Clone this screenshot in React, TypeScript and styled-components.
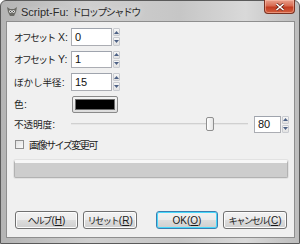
import styled, { createGlobalStyle } from "styled-components";

const GlobalStyle = createGlobalStyle`
  html, body {
    margin: 0;
    padding: 0;
    overflow: hidden;
    background: #ffffff;
  }
  * {
    box-sizing: border-box;
  }
`;

const UI_FONT = `"Liberation Sans", "Noto Sans CJK JP", sans-serif`;

const Spin = ({ value, width }: { value: string; width: number }) => (
  <StyledSpin>
    <StyledEntry style={{ width }}>{value}</StyledEntry>
    <StyledArrows>
      <StyledArrow>
        <svg width="5" height="3" viewBox="0 0 5 3">
          <path d="M0 3 L2.5 0 L5 3 Z" fill="#4d6185" />
        </svg>
      </StyledArrow>
      <StyledArrow>
        <svg width="5" height="3" viewBox="0 0 5 3">
          <path d="M0 0 L2.5 3 L5 0 Z" fill="#4d6185" />
        </svg>
      </StyledArrow>
    </StyledArrows>
  </StyledSpin>
);

const App = () => {
  return (
    <>
      <GlobalStyle />
      <StyledWindow>
        <StyledTitleBar>
          <svg width="12" height="12" viewBox="0 0 12 12">
            <path d="M1 2 L4 4 L8 4 L11 2 L10 7 L8 11 L4 11 L2 7 Z" fill="#6b6b66" />
            <circle cx="4.5" cy="6.5" r="1.3" fill="#ffffff" />
            <circle cx="7.5" cy="6.5" r="1.3" fill="#ffffff" />
            <circle cx="4.5" cy="6.5" r="0.6" fill="#222" />
            <circle cx="7.5" cy="6.5" r="0.6" fill="#222" />
          </svg>
          <StyledTitle>
            Script-Fu: <StyledKana>ドロップシャドウ</StyledKana>
          </StyledTitle>
          <StyledClose>
            <svg width="10" height="8" viewBox="0 0 10 8">
              <path d="M1.5 1 L8.5 7 M8.5 1 L1.5 7" stroke="#6b2517" strokeWidth="3" />
              <path d="M1.5 1 L8.5 7 M8.5 1 L1.5 7" stroke="#ffffff" strokeWidth="1.6" />
            </svg>
          </StyledClose>
        </StyledTitleBar>
        <StyledClient>
          <StyledForm>
            <StyledLabel>
              <StyledKana>オフセット</StyledKana> X:
            </StyledLabel>
            <Spin value="0" width={41} />
            <StyledLabel>
              <StyledKana>オフセット</StyledKana> Y:
            </StyledLabel>
            <Spin value="1" width={41} />
            <StyledLabel>
              <StyledKana $loose>ぼかし半径</StyledKana>:
            </StyledLabel>
            <Spin value="15" width={41} />
            <StyledLabel>
              <StyledKana $loose>色</StyledKana>:
            </StyledLabel>
            <StyledColorButton>
              <StyledSwatch />
            </StyledColorButton>
            <StyledLabel>
              <StyledKana $loose>不透明度</StyledKana>:
            </StyledLabel>
            <StyledSliderRow>
              <StyledTrack>
                <StyledThumb style={{ left: `${80 * 1.69}px` }} />
              </StyledTrack>
              <Spin value="80" width={27} />
            </StyledSliderRow>
          </StyledForm>
          <StyledCheckRow>
            <StyledCheckbox />
            <StyledKana>画像サイズ変更可</StyledKana>
          </StyledCheckRow>
          <StyledProgress />
          <StyledButtons>
            <StyledButton $w={64}>
              <StyledKana>ヘルプ</StyledKana>(<u>H</u>)
            </StyledButton>
            <StyledButton $w={55}>
              <StyledKana>リセット</StyledKana>(<u>R</u>)
            </StyledButton>
            <StyledSpacer />
            <StyledButton $w={63} $focused>
              OK(<u>O</u>)
            </StyledButton>
            <StyledButton $w={65}>
              <StyledKana>キャンセル</StyledKana>(<u>C</u>)
            </StyledButton>
          </StyledButtons>
        </StyledClient>
      </StyledWindow>
    </>
  );
};

export default App;

const StyledWindow = styled.div`
  width: 300px;
  height: 244px;
  display: flex;
  flex-direction: column;
  border: 1px solid #5a5a5a;
  border-radius: 6px 6px 0 0;
  background: linear-gradient(
    to right,
    #b4b4b4 0%,
    #cfcfcf 30%,
    #c6c6c6 60%,
    #d9d9d9 82%,
    #bdbdbd 100%
  );
  font-family: ${UI_FONT};
  color: #1e1e1e;
`;

const StyledKana = styled.span<{ $loose?: boolean }>`
  font-family: "Noto Sans CJK JP", sans-serif;
  font-size: 0.92em;
  letter-spacing: ${(p) => (p.$loose ? "-0.02em" : "-0.16em")};
  padding-right: ${(p) => (p.$loose ? "0.05em" : "0.06em")};
`;

const StyledTitleBar = styled.div`
  height: 20px;
  display: flex;
  align-items: center;
  padding-left: 5px;
  gap: 3px;
  position: relative;
`;

const StyledTitle = styled.div`
  font-size: 11px;
  color: #2a2a2a;
  white-space: nowrap;
  text-shadow: 0 0 6px rgba(255, 255, 255, 0.8);
`;

const StyledClose = styled.div`
  position: absolute;
  top: -1px;
  right: 4px;
  width: 31px;
  height: 14px;
  display: flex;
  align-items: center;
  justify-content: center;
  border: 1px solid #7a3222;
  border-top: none;
  border-radius: 0 0 4px 4px;
  background: linear-gradient(to bottom, #e9a08c 0%, #d86b51 45%, #c23c21 55%, #d3603f 100%);
  box-shadow: inset 0 0 0 1px rgba(255, 200, 180, 0.5);
`;

const StyledClient = styled.div`
  flex: 1;
  margin: 0 4px 5px 5px;
  background: #f0f0f0;
  border: 1px solid #8e8e8e;
  padding: 6px 7px 8px 7px;
  display: flex;
  flex-direction: column;
  font-size: 11px;
`;

const StyledForm = styled.div`
  display: grid;
  grid-template-columns: 57px 1fr;
  grid-template-rows: 17.5px 17.5px 17.5px 17px 17.5px;
  row-gap: 5px;
  align-items: center;

  & > :nth-child(n + 9) {
    margin-top: -4px;
  }
`;

const StyledLabel = styled.div`
  font-size: 10.5px;
  white-space: nowrap;
`;

const StyledSpin = styled.div`
  display: flex;
  align-items: stretch;
  height: 17.5px;
  gap: 1px;
`;

const StyledEntry = styled.div`
  background: #ffffff;
  border: 1px solid #abadb3;
  border-top-color: #9fa4ad;
  padding-left: 3px;
  font-size: 11px;
  display: flex;
  align-items: center;
  color: #111;
`;

const StyledArrows = styled.div`
  width: 7px;
  display: flex;
  flex-direction: column;
  gap: 1px;
`;

const StyledArrow = styled.div`
  flex: 1;
  background: linear-gradient(to bottom, #f6f6f6, #e2e2e2);
  border: 1px solid #c9cbd0;
  border-radius: 1px;
  display: flex;
  align-items: center;
  justify-content: center;
`;

const StyledColorButton = styled.div`
  width: 46px;
  height: 17px;
  margin-left: 1px;
  border: 1px solid #8a8a8a;
  border-radius: 2px;
  background: linear-gradient(to bottom, #f4f4f4, #dcdcdc);
  padding: 2px;
`;

const StyledSwatch = styled.div`
  width: 100%;
  height: 100%;
  background: #000000;
  border: 1px solid #6d6d6d;
`;

const StyledSliderRow = styled.div`
  display: flex;
  align-items: center;
  gap: 6px;
`;

const StyledTrack = styled.div`
  position: relative;
  width: 177px;
  height: 2px;
  background: #e6e6e6;
  border-top: 1px solid #d0d0d0;
`;

const StyledThumb = styled.div`
  position: absolute;
  top: -7px;
  width: 8px;
  height: 14px;
  border: 1px solid #8f8f8f;
  border-radius: 2px;
  background: linear-gradient(to right, #ffffff, #e4e4e4);
`;

const StyledCheckRow = styled.div`
  margin-top: 2px;
  margin-left: 1px;
  display: flex;
  align-items: center;
  gap: 5px;
  font-size: 11px;
  white-space: nowrap;
`;

const StyledCheckbox = styled.div`
  width: 9px;
  height: 9px;
  border: 1px solid #8f8f8f;
  background: linear-gradient(135deg, #e0e0e0, #fafafa);
`;

const StyledProgress = styled.div`
  margin-top: 8px;
  height: 18px;
  width: 274px;
  border: 1px solid #b2b2b2;
  border-top: 3px solid #f7f7f7;
  border-radius: 2px;
  background: #cdcdcd;
  box-shadow: 0 0 0 1px #e2e2e2;
`;

const StyledButtons = styled.div`
  margin-top: auto;
  display: flex;
  gap: 5px;
  margin-left: 1px;
`;

const StyledSpacer = styled.div`
  width: 9px;
`;

const StyledButton = styled.div<{ $w: number; $focused?: boolean }>`
  width: ${(p) => p.$w}px;
  height: 18px;
  display: flex;
  align-items: center;
  justify-content: center;
  white-space: nowrap;
  font-size: 10px;
  border: 1px solid ${(p) => (p.$focused ? "#3c7fb1" : "#707070")};
  border-radius: 3px;
  background: linear-gradient(to bottom, #f2f2f2 0%, #ebebeb 50%, #dddddd 51%, #cfcfcf 100%);
  box-shadow: inset 0 0 0 1px ${(p) => (p.$focused ? "#48d8fb" : "#fcfcfc")};
  color: #1a1a1a;

  u {
    text-decoration: underline;
  }
`;
